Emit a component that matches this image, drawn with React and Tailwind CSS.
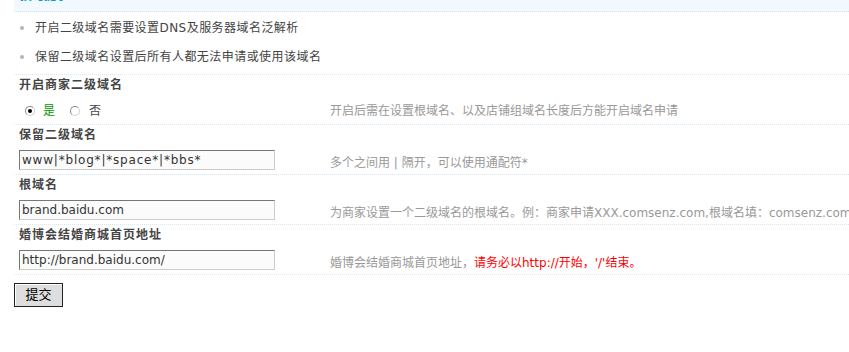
export default function App() {
  const font = "font-['DejaVu_Sans','Noto_Sans_CJK_SC',sans-serif]";
  const tips = [
    "开启二级域名需要设置DNS及服务器域名泛解析",
    "保留二级域名设置后所有人都无法申请或使用该域名",
  ];
  const row = "flex h-[30px] items-start border-b border-dotted border-[#d6e8f5]";
  const label = "h-[20px] leading-[20px] pl-[5px] font-bold tracking-[1px] text-[#444]";
  const input = `w-[256px] h-[20px] px-[2px] border border-[#777] border-r-[#ccc] border-b-[#ccc] bg-[#fbfbfb] text-[#333] text-[12px] outline-none ${font}`;

  return (
    <div className={`w-full min-h-[352px] overflow-hidden bg-white text-[12px] text-[#333] ${font}`}>
      <div className="pl-[14px] whitespace-nowrap">
        {/* tip header, scrolled off the top */}
        <div className="h-[12px] overflow-hidden bg-[#f2f9fd] border-b border-dotted border-[#cfe3f2] pl-[6px]">
          <div className="mt-[-10px] leading-[12px] font-bold text-[#0099cc] text-[12px]">技巧提示</div>
        </div>

        {/* tips */}
        <ul className="pt-[1px] pb-[3px] border-b border-dotted border-[#d6e8f5]">
          {tips.map(t => (
            <li key={t} className="flex items-center h-[29px]">
              <span className="ml-[6px] w-[4px] h-[4px] rounded-full bg-[#b5b5b5]"></span>
              <span className="ml-[11px] tracking-[0.45px] text-[#444]">{t}</span>
            </li>
          ))}
        </ul>

        {/* 开启商家二级域名 */}
        <div className={label}>开启商家二级域名</div>
        <div className="flex h-[30px] items-center pt-[2px] border-b border-dotted border-[#d6e8f5]">
          <div className="w-[316px] shrink-0 pl-[11px] flex items-center">
            <span className="w-[10px] h-[10px] rounded-full border border-[#8a8a8a] border-r-[#d0d0d0] border-b-[#d0d0d0] bg-white flex items-center justify-center">
              <span className="w-[4px] h-[4px] rounded-full bg-black"></span>
            </span>
            <span className="ml-[8px] text-[#009900]">是</span>
            <span className="ml-[15px] w-[10px] h-[10px] rounded-full border border-[#8a8a8a] border-r-[#d0d0d0] border-b-[#d0d0d0] bg-white"></span>
            <span className="ml-[9px] text-[#444]">否</span>
          </div>
          <div className="text-[#999]">开启后需在设置根域名、以及店铺组域名长度后方能开启域名申请</div>
        </div>

        {/* 保留二级域名 */}
        <div className={label}>保留二级域名</div>
        <div className={row}>
          <div className="w-[316px] shrink-0 pl-[5px] pt-[5px]">
            <input readOnly value="www|*blog*|*space*|*bbs*" className={`${input} tracking-[0.8px]`} />
          </div>
          <div className="pt-[9px] text-[#999]">多个之间用 | 隔开，可以使用通配符*</div>
        </div>

        {/* 根域名 */}
        <div className={label}>根域名</div>
        <div className={row}>
          <div className="w-[316px] shrink-0 pl-[5px] pt-[5px]">
            <input readOnly value="brand.baidu.com" className={input} />
          </div>
          <div className="pt-[9px] text-[#999]">为商家设置一个二级域名的根域名。例：商家申请XXX.comsenz.com,根域名填：comsenz.com</div>
        </div>

        {/* 婚博会结婚商城首页地址 */}
        <div className={label}>婚博会结婚商城首页地址</div>
        <div className={row}>
          <div className="w-[316px] shrink-0 pl-[5px] pt-[5px]">
            <input readOnly value="http://brand.baidu.com/" className={input} />
          </div>
          <div className="pt-[9px] text-[#999]">婚博会结婚商城首页地址，<span className="text-[#ff0000]">请务必以http://开始，'/'结束。</span></div>
        </div>

        <button className="mt-[8px] w-[49px] h-[24px] border border-[#222] bg-[#dedede] shadow-[inset_1px_1px_0_#fff] text-[13px] text-black">提交</button>
      </div>
    </div>
  );
}
